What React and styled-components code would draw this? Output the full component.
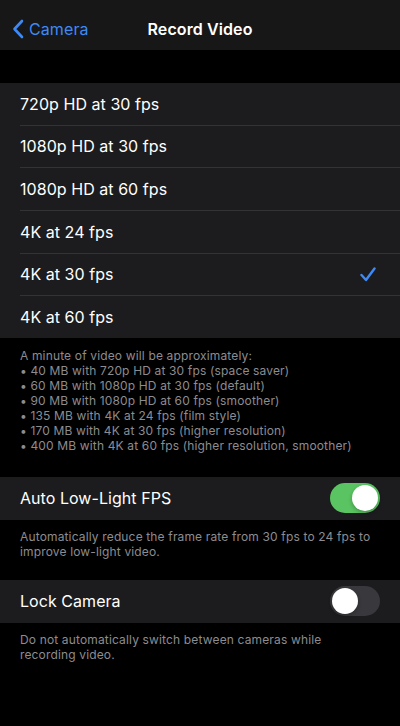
import React, { useState } from 'react';
import styled, { createGlobalStyle } from 'styled-components';

const Global = createGlobalStyle`
  html, body {
    margin: 0;
    background: #000;
  }
  body {
    font-family: Inter, "Noto Sans", "Liberation Sans", sans-serif;
    -webkit-font-smoothing: antialiased;
  }
`;

const Screen = styled.div`
  width: 400px;
  min-height: 726px;
  background: #000;
  color: #fff;
  display: flex;
  flex-direction: column;
`;

const NavBar = styled.div`
  height: 50px;
  background: #171717;
  display: grid;
  grid-template-columns: 1fr auto 1fr;
  align-items: center;
  padding-top: 7px;
  box-sizing: border-box;
`;

const Back = styled.div`
  display: flex;
  align-items: center;
  gap: 5px;
  padding-left: 12px;
  color: #3d8af7;
  font-size: 16px;
  letter-spacing: 0.1px;
`;

const Title = styled.div`
  font-size: 16px;
  font-weight: 600;
  letter-spacing: 0.1px;
`;

const Group = styled.div`
  background: #1c1c1e;
  margin-top: ${p => p.$top || 0}px;
`;

const Row = styled.div`
  height: ${p => p.$h || 41.67}px;
  display: flex;
  align-items: center;
  justify-content: space-between;
  padding: 0 20px;
  font-size: 16px;
  letter-spacing: 0.05px;
  position: relative;
  &:not(:last-child)::after {
    content: '';
    position: absolute;
    left: 20px;
    right: 0;
    bottom: -1px;
    height: 1px;
    background: #333335;
  }
  & + & {
    margin-top: 1px;
  }
`;

const Note = styled.div`
  padding: ${p => p.$pad};
  color: #8c8c90;
  font-size: 12px;
  line-height: 15px;
  letter-spacing: 0.15px;
`;

const Track = styled.div`
  width: 50px;
  height: 30px;
  border-radius: 15px;
  background: ${p => (p.$on ? '#5ac462' : '#39393d')};
  display: flex;
  align-items: center;
  justify-content: ${p => (p.$on ? 'flex-end' : 'flex-start')};
  padding: 0 2px;
  box-sizing: border-box;
  cursor: pointer;
`;

const Knob = styled.div`
  width: 26px;
  height: 26px;
  border-radius: 50%;
  background: #fff;
  box-shadow: 0 2px 4px rgba(0, 0, 0, 0.25);
`;

const Toggle = ({ on, onClick }) => (
  <Track $on={on} onClick={onClick}>
    <Knob />
  </Track>
);

const Check = () => (
  <svg width="16" height="15" viewBox="0 0 16 15" style={{ marginRight: 4 }}>
    <path d="M1.5 8 L6 13 L14.5 1.5" fill="none" stroke="#3d8af7" strokeWidth="2.4" strokeLinecap="round" strokeLinejoin="round" />
  </svg>
);

const options = [
  '720p HD at 30 fps',
  '1080p HD at 30 fps',
  '1080p HD at 60 fps',
  '4K at 24 fps',
  '4K at 30 fps',
  '4K at 60 fps',
];

const sizes = [
  '40 MB with 720p HD at 30 fps (space saver)',
  '60 MB with 1080p HD at 30 fps (default)',
  '90 MB with 1080p HD at 60 fps (smoother)',
  '135 MB with 4K at 24 fps (film style)',
  '170 MB with 4K at 30 fps (higher resolution)',
  '400 MB with 4K at 60 fps (higher resolution, smoother)',
];

export default function App() {
  const [selected, setSelected] = useState(4);
  const [lowLight, setLowLight] = useState(true);
  const [lock, setLock] = useState(false);

  return (
    <Screen>
      <Global />
      <NavBar>
        <Back>
          <svg width="12" height="20" viewBox="0 0 12 20">
            <path d="M10 2 L2.5 10 L10 18" fill="none" stroke="#3d8af7" strokeWidth="2.6" strokeLinecap="round" strokeLinejoin="round" />
          </svg>
          Camera
        </Back>
        <Title>Record Video</Title>
        <div />
      </NavBar>

      <Group $top={33}>
        {options.map((o, i) => (
          <Row key={o} onClick={() => setSelected(i)}>
            {o}
            {selected === i && <Check />}
          </Row>
        ))}
      </Group>
      <Note $pad="10px 20px 24px">
        A minute of video will be approximately:
        {sizes.map(s => (
          <div key={s}>• {s}</div>
        ))}
      </Note>

      <Group>
        <Row $h={43}>
          Auto Low-Light FPS
          <Toggle on={lowLight} onClick={() => setLowLight(!lowLight)} />
        </Row>
      </Group>
      <Note $pad="9px 27px 21px 20px">
        Automatically reduce the frame rate from 30 fps to 24 fps to improve low-light video.
      </Note>

      <Group>
        <Row $h={43}>
          Lock Camera
          <Toggle on={lock} onClick={() => setLock(!lock)} />
        </Row>
      </Group>
      <Note $pad="9px 27px 8px 20px">
        Do not automatically switch between cameras while recording video.
      </Note>
    </Screen>
  );
}
